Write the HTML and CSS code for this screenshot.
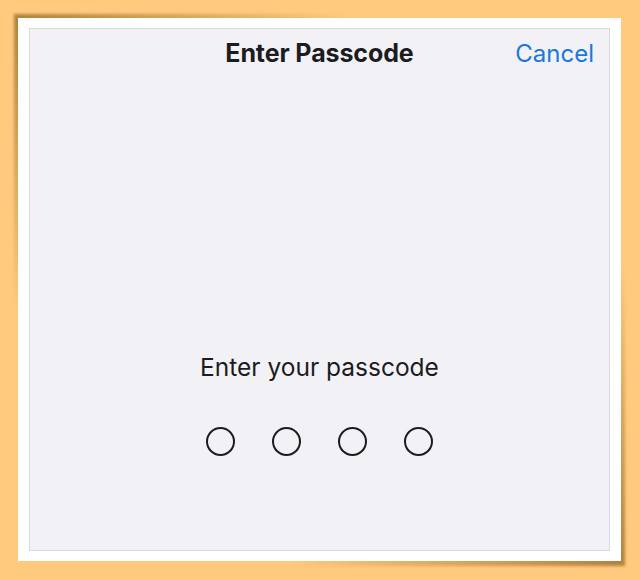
FILE: index.html
```html
<!DOCTYPE html>
<html lang="en">
<head>
  <meta charset="UTF-8">
  <meta name="viewport" content="width=device-width, initial-scale=1.0">
  <title>Enter Passcode</title>
  <link rel="stylesheet" href="styles.css">
</head>
<body>
  <div class="photo">
    <div class="sheet">
      <header class="nav">
        <span></span>
        <h1 class="nav-title">Enter Passcode</h1>
        <a class="nav-cancel" href="#">Cancel</a>
      </header>
      <p class="prompt">Enter your passcode</p>
      <div class="dots">
        <span class="dot"></span>
        <span class="dot"></span>
        <span class="dot"></span>
        <span class="dot"></span>
      </div>
    </div>
  </div>
</body>
</html>
```
FILE: styles.css
```css
:root {
  font-family: Inter, "Noto Sans", sans-serif;
  color: #1c1c1e;
}
*, ::before, ::after {
  box-sizing: border-box;
}
body {
  margin: 0;
  background: #ffca7e;
  overflow: hidden;
}
.photo {
  position: relative;
  width: 603px;
  height: 543px;
  margin: 18px;
  padding: 10px 11px;
  background: #fff;
}
/* curled paper shadows on two corners */
.photo::before, .photo::after {
  content: "";
  position: absolute;
  z-index: -1;
  width: 340px;
  height: 300px;
  filter: blur(1.5px);
}
.photo::before {
  top: -4px;
  left: -4px;
  background: radial-gradient(ellipse at top left, rgba(110, 70, 10, .55), rgba(110, 70, 10, 0) 70%);
}
.photo::after {
  right: -4px;
  bottom: -5px;
  background: radial-gradient(ellipse at bottom right, rgba(110, 70, 10, .55), rgba(110, 70, 10, 0) 70%);
}
.sheet {
  height: 100%;
  background: #f2f1f6;
  border: 1px solid #d9d9e1;
}
.nav {
  display: grid;
  grid-template-columns: 1fr auto 1fr;
  align-items: center;
  height: 48px;
  padding: 0 15px;
}
.nav-title {
  margin: 0;
  font-size: 25px;
  font-weight: 700;
  letter-spacing: -.1px;
}
.nav-cancel {
  justify-self: end;
  color: #1a78dc;
  font-size: 24px;
  text-decoration: none;
}
.prompt {
  margin: 275px 0 0;
  text-align: center;
  font-size: 24.5px;
  line-height: 30px;
}
.dots {
  display: flex;
  justify-content: center;
  gap: 37px;
  margin-top: 45px;
}
.dot {
  width: 29px;
  height: 29px;
  border: 2px solid #1c1c1e;
  border-radius: 50%;
}
```
